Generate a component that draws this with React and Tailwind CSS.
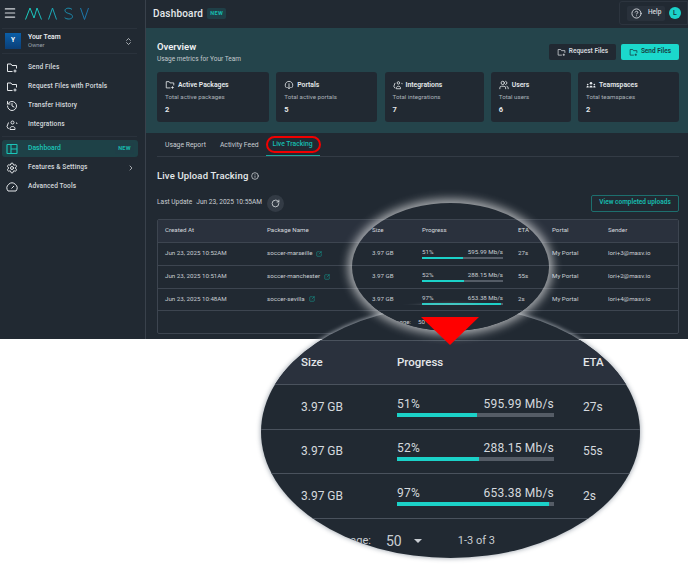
import {
  ChevronRight,
  ChevronsUpDown,
  CircleHelp,
  History,
  Info,
  Menu,
  RotateCw,
  Settings,
  SquareArrowOutUpRight,
  Users,
} from "lucide-react";

function FolderIcon({ className }) {
  return (
    <svg viewBox="0 0 24 24" fill="none" stroke="currentColor" strokeWidth="2" className={className}>
      <path d="M13 19H3V4h7l2 3h9v6" />
      <path d="M18 15v6M15 18h6" />
    </svg>
  );
}

function LinkIcon({ className }) {
  return (
    <svg viewBox="0 0 24 24" fill="none" stroke="currentColor" strokeWidth="2" className={className}>
      <circle cx="13" cy="7" r="3" />
      <path d="M8 21v-2c0-2 2-4 5-4s5 2 5 4v2z" />
      <path d="M5 7 2 15l3 5M21 7l1 3" />
    </svg>
  );
}

function PortalIcon({ className }) {
  return (
    <svg viewBox="0 0 24 24" fill="none" stroke="currentColor" strokeWidth="2" className={className}>
      <path d="M6 19a9 9 0 1 1 12 0" />
      <path d="M12 8v13M8 17l4 4 4-4" />
    </svg>
  );
}

function GaugeIcon({ className }) {
  return (
    <svg viewBox="0 0 24 24" fill="none" stroke="currentColor" strokeWidth="2" className={className}>
      <path d="M4 20a10 10 0 1 1 16 0z" />
      <path d="M11 15l5-5" />
    </svg>
  );
}

function TeamspaceIcon({ className }) {
  return (
    <svg viewBox="0 0 24 24" fill="currentColor" className={className}>
      <circle cx="12" cy="8" r="3" />
      <circle cx="4" cy="11" r="2" />
      <circle cx="20" cy="11" r="2" />
      <path d="M8 18c0-3 2-4.500 4-4.500s4 1.500 4 4.500zM1 18c0-2 1-3.500 3-3.500s2.500 1 2.500 3.500zM17.500 18c0-2.500 .5-3.500 2.500-3.500s3 1.500 3 3.500z" />
    </svg>
  );
}

function DashboardIcon({ className }) {
  return (
    <svg viewBox="0 0 24 24" fill="none" stroke="currentColor" strokeWidth="2.2" className={className}>
      <rect x="2" y="3" width="20" height="18" rx="1" />
      <path d="M10 3v18M10 12h12" />
    </svg>
  );
}

function Logo() {
  return (
    <svg width="64" height="13" viewBox="0 0 64 13" fill="none" strokeWidth="1" className="ml-[8px]">
      <defs>
        <linearGradient id="masv" x1="0" x2="1" y1="0" y2="0">
          <stop offset="0" stopColor="#1bd1c0" />
          <stop offset="1" stopColor="#1b6fa8" />
        </linearGradient>
      </defs>
      <path
        d="M0.500 12.500 5 1l4 10 3-10 4.500 11.500M23.500 12.500 27.500 1l4 11.500M47 2.500C45 .500 40 .800 40 3.500c0 3.500 7.500 2.500 7.500 6 0 3-5.500 3.200-7.800 1.200M55.500 1l4 11.500 4-11.500"
        stroke="url(#masv)"
      />
    </svg>
  );
}

function NavItem({ icon: Icon, label, extra }) {
  return (
    <div className="flex items-center h-[19px] pl-[6px] pr-[10px] text-[6.6px] font-medium tracking-[0.1px] text-[#d5d9de]">
      <Icon className="w-[12px] h-[12px] mr-[10px] text-[#e4e7ea]" />
      <span className="flex-1">{label}</span>
      {extra}
    </div>
  );
}

function NewBadge() {
  return (
    <span className="w-[19px] h-[11px] flex items-center justify-center rounded-[2px] bg-[#1f3f47] text-[#17bdb0] text-[5.5px] font-bold tracking-[0.3px]">
      NEW
    </span>
  );
}

function Sidebar() {
  return (
    <aside className="w-[146px] shrink-0 bg-[#212932] border-r border-[#39414b] flex flex-col">
      <div className="h-[28px] flex items-center pl-[3px] pb-[2px]">
        <Menu className="w-[14px] h-[14px] text-[#d5d9de]" />
        <Logo />
      </div>
      <div className="ml-[2px] mr-[8px] h-[26px] flex items-center border-y border-[#2a323c] pl-[3px] pr-[4px]">
        <div className="w-[16px] h-[16px] bg-gradient-to-b from-[#0b5fa8] to-[#0a3f78] flex items-center justify-center text-[6.5px] font-bold text-white">
          Y
        </div>
        <div className="ml-[7px] flex-1 leading-[8px]">
          <div className="text-[6.8px] font-semibold text-[#e6e9ec]">Your Team</div>
          <div className="text-[5.8px] text-[#9aa2ab]">Owner</div>
        </div>
        <ChevronsUpDown className="w-[9px] h-[11px] text-[#d5d9de]" />
      </div>
      <nav className="pt-[3px] mt-[1px]">
        <NavItem icon={FolderIcon} label="Send Files" />
        <NavItem icon={FolderIcon} label="Request Files with Portals" />
        <NavItem icon={History} label="Transfer History" />
        <NavItem icon={LinkIcon} label="Integrations" />
      </nav>
      <div className="ml-[2px] mr-[8px] mt-[2px] border-t border-[#2a323c]" />
      <div className="ml-[2px] mr-[7px] mt-[3px] h-[17px] flex items-center pl-[4px] pr-[4px] rounded-[3px] bg-[#1e4147] text-[6.8px] font-medium text-[#1bc5b8]">
        <DashboardIcon className="w-[12px] h-[12px] mr-[10px]" />
        <span className="flex-1">Dashboard</span>
        <NewBadge />
      </div>
      <div className="mt-[1px]">
        <NavItem
          icon={Settings}
          label="Features & Settings"
          extra={<ChevronRight className="w-[8px] h-[8px] text-[#e4e7ea]" />}
        />
        <NavItem icon={GaugeIcon} label="Advanced Tools" />
      </div>
    </aside>
  );
}

function StatCard({ icon: Icon, title, desc, value, width }) {
  return (
    <div className={`${width} h-[50px] rounded-[3px] bg-[#212932] pl-[8px] pt-[8px]`}>
      <div className="flex items-center gap-[3px] text-[6.8px] font-semibold leading-[10px] text-[#e6e9ec]">
        <Icon className="w-[10px] h-[10px]" />
        {title}
      </div>
      <div className="mt-[3px] text-[6.2px] leading-[9px] text-[#aab1b8]">{desc}</div>
      <div className="mt-[3px] text-[7.500px] font-bold leading-[10px] text-[#e6e9ec]">{value}</div>
    </div>
  );
}

const rowClass = "grid grid-cols-[102px_105px_50px_96px_34px_56px_1fr] items-center pl-[7px]";

const rows = [
  ["Jun 23, 2025 10:52AM", "soccer-marseille", "51%", "595.99 Mb/s", "27s", "lori+3@masv.io", "w-[51%]"],
  ["Jun 23, 2025 10:51AM", "soccer-manchester", "52%", "288.15 Mb/s", "55s", "lori+2@masv.io", "w-[52%]"],
  ["Jun 23, 2025 10:48AM", "soccer-sevilla", "97%", "653.38 Mb/s", "2s", "lori+4@masv.io", "w-[97%]"],
];

function UploadsTable() {
  return (
    <div className="w-[522px] h-[115px] rounded-[2px] border border-[#3d4550] bg-[#212932] text-[6.2px] text-[#c9ced3] flex flex-col overflow-hidden">
      <div className={`${rowClass} h-[23px] shrink-0 bg-[#2a313d] border-b border-[#3d4550] text-[#d5d9de]`}>
        <div>Created At</div>
        <div>Package Name</div>
        <div>Size</div>
        <div>Progress</div>
        <div>ETA</div>
        <div>Portal</div>
        <div>Sender</div>
      </div>
      {rows.map((row) => (
        <div key={row[1]} className={`${rowClass} h-[22.750px] shrink-0 border-b border-[#3d4550]`}>
          <div>{row[0]}</div>
          <div className="flex items-center gap-[4px]">
            {row[1]}
            <SquareArrowOutUpRight className="w-[6px] h-[6px] text-[#17a89d]" />
          </div>
          <div>3.97 GB</div>
          <div className="w-[81px]">
            <div className="flex justify-between leading-[8px]">
              <span>{row[2]}</span>
              <span>{row[3]}</span>
            </div>
            <div className="h-[2px] mt-[1px] bg-[#555c66]">
              <div className={`h-full bg-[#1bd1c8] ${row[6]}`} />
            </div>
          </div>
          <div>{row[4]}</div>
          <div>My Portal</div>
          <div>{row[5]}</div>
        </div>
      ))}
    </div>
  );
}

const zoomRowClass = "grid grid-cols-[96px_186px_1fr] items-center pl-[40px] text-[12px] text-[#d5d9de]";

function Magnifier() {
  return (
    <div className="absolute left-[261px] top-[306px] w-[379px] h-[252px] rounded-[50%] bg-[#212932] overflow-hidden shadow-[0_0_4px_1px_rgba(170,176,184,0.9)]">
      <div className="mt-[34px] border-t border-[#4a525d] bg-[#2a313d]">
        <div className={`${zoomRowClass} h-[43px] font-medium text-[#e4e7ea]`}>
          <div className="text-[11.500px]">Size</div>
          <div className="text-[11.500px]">Progress</div>
          <div className="text-[11.500px]">ETA</div>
        </div>
      </div>
      {rows.map((row) => (
        <div key={row[1]} className={`${zoomRowClass} h-[44.500px] border-t border-[#4a525d]`}>
          <div>3.97 GB</div>
          <div className="w-[157px]">
            <div className="flex justify-between leading-[14px] tracking-[0.2px]">
              <span>{row[2]}</span>
              <span>{row[3]}</span>
            </div>
            <div className="h-[4px] mt-[2px] bg-[#555c66]">
              <div className={`h-full bg-[#1bd1c8] ${row[6]}`} />
            </div>
          </div>
          <div>{row[4]}</div>
        </div>
      ))}
      <div className="border-t border-[#4a525d] h-[46px] flex items-center text-[11px] text-[#c9ced3]">
        <span className="w-[110px] text-right whitespace-nowrap">Rows per page:</span>
        <span className="ml-[15px] text-[14px]">50</span>
        <span className="ml-[12px] w-0 h-0 border-x-[4px] border-x-transparent border-t-[4px] border-t-[#c9ced3]" />
        <span className="ml-[36px]">1-3 of 3</span>
      </div>
    </div>
  );
}

function Spotlight() {
  return (
    <div className="absolute left-[352px] top-[203px] w-[197px] h-[128px] rounded-[50%] overflow-hidden shadow-[0_0_10px_4px_rgba(255,255,255,0.6)]">
      {/* bottom cap: sits over the magnifier and holds the table's footer */}
      <div className="absolute left-0 right-0 top-[102px] bottom-0 bg-[#212932]">
        <div className="h-[6px] border-b border-[#3d4550]" />
        <div className="flex justify-end w-[73px] pt-[7px] text-[6.2px] text-[#c9ced3] gap-[7px] whitespace-nowrap">
          <span>Rows per page:</span>
          <span>50</span>
        </div>
      </div>
    </div>
  );
}

export default function App() {
  return (
    <div className="relative w-[688px] h-[568px] bg-white overflow-hidden font-['Roboto',sans-serif]">
      <div className="flex h-[339px] overflow-hidden bg-[#212932]">
        <Sidebar />
        <main className="flex-1 min-w-0 flex flex-col">
          <header className="h-[28px] shrink-0 flex items-center pl-[7px] pb-[2px] bg-[#212932]">
            <span className="text-[10px] font-medium tracking-[0.2px] text-[#e6e9ec]">Dashboard</span>
            <span className="ml-[4px]">
              <NewBadge />
            </span>
            <div className="ml-auto w-[69px] h-[24px] border border-[#2c343e] rounded-l-[3px] flex items-center pl-[7px]">
              <div className="w-[38px] h-[15px] rounded-[2px] bg-[#29313b] flex items-center pl-[4px] gap-[6px] text-[6.5px] font-medium text-[#d5d9de]">
                <CircleHelp className="w-[11px] h-[11px]" />
                Help
              </div>
              <div className="ml-[4px] w-[12px] h-[12px] rounded-full bg-[#1bd1c8] flex items-center justify-center text-[7px] font-medium text-[#173036]">
                L
              </div>
            </div>
          </header>

          <section className="h-[105px] shrink-0 bg-[#24444b] px-[11px] pt-[13px] pr-[9px]">
            <div className="flex items-start justify-between h-[31px]">
              <div>
                <div className="text-[9.500px] font-semibold leading-[11px] text-[#eef0f2]">Overview</div>
                <div className="mt-[3px] text-[6.500px] leading-[9px] text-[#c3cacd]">Usage metrics for Your Team</div>
              </div>
              <div className="flex gap-[5px] mt-[3px] text-[6.500px] font-semibold">
                <button className="w-[67px] h-[16px] rounded-[2px] bg-[#212932] text-[#d5d9de] flex items-center justify-center gap-[3px]">
                  <FolderIcon className="w-[9px] h-[9px]" />
                  Request Files
                </button>
                <button className="w-[58px] h-[16px] rounded-[2px] bg-[#1bd8cc] text-[#173b40] flex items-center justify-center gap-[3px]">
                  <FolderIcon className="w-[9px] h-[9px]" />
                  Send Files
                </button>
              </div>
            </div>
            <div className="flex justify-between">
              <StatCard icon={FolderIcon} title="Active Packages" desc="Total active packages" value="2" width="w-[112px]" />
              <StatCard icon={PortalIcon} title="Portals" desc="Total active portals" value="5" width="w-[101px]" />
              <StatCard icon={LinkIcon} title="Integrations" desc="Total integrations" value="7" width="w-[99px]" />
              <StatCard icon={Users} title="Users" desc="Total users" value="6" width="w-[80px]" />
              <StatCard icon={TeamspaceIcon} title="Teamspaces" desc="Total teamspaces" value="2" width="w-[101px]" />
            </div>
          </section>

          <div className="flex-1 px-[11px] pr-[9px]">
            <div className="h-[24px] border-b border-[#333b45] flex items-center pl-[8px] text-[6.800px] text-[#c9ced3]">
              <span className="pt-[1px]">Usage Report</span>
              <span className="ml-[14px] pt-[1px]">Activity Feed</span>
              <span className="relative ml-[7px] w-[54px] h-full flex items-center justify-center pt-[1px] font-medium text-[#17bdb0] border-b border-[#17a89d]">
                Live Tracking
                <span className="absolute left-0 top-[3px] w-[55px] h-[17px] rounded-[9px] border-2 border-[#f00000]" />
              </span>
            </div>
            <div className="mt-[13px] flex items-center gap-[3px] h-[12px] text-[9.500px] font-medium tracking-[0.15px] text-[#e6e9ec]">
              Live Upload Tracking
              <Info className="w-[8px] h-[8px]" />
            </div>
            <div className="mt-[8px] h-[26px] flex items-center text-[6.600px] text-[#c9ced3]">
              <span>Last Update</span>
              <span className="ml-[4px]">Jun 23, 2025 10:55AM</span>
              <span className="ml-[5px] w-[17px] h-[17px] rounded-full bg-[#333b45] flex items-center justify-center">
                <RotateCw className="w-[9px] h-[9px] text-[#e6e9ec]" />
              </span>
              <button className="ml-auto w-[88px] h-[17px] rounded-[2px] border border-[#1d6f6e] text-[6.500px] font-semibold text-[#17bdb0]">
                View completed uploads
              </button>
            </div>
            <div className="mt-[3px]">
              <UploadsTable />
            </div>
          </div>
        </main>
      </div>

      <Magnifier />
      <Spotlight />

      <div className="absolute left-[421px] top-[317px] w-[58px] h-[28px] bg-[#ff0000] [clip-path:polygon(0_0,100%_0,50%_100%)]" />
    </div>
  );
}
